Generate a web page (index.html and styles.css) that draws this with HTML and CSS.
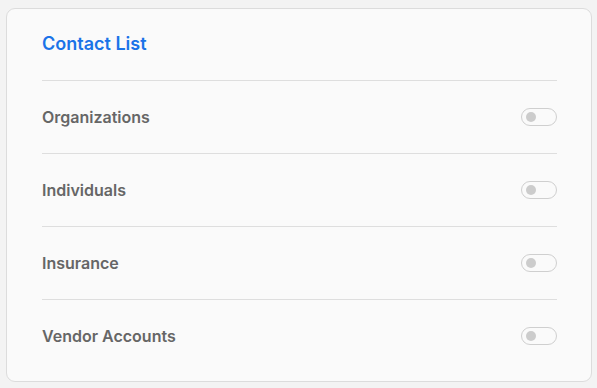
FILE: index.html
```html
<!DOCTYPE html>
<html>
<head>
<meta charset="utf-8">
<link rel="stylesheet" href="styles.css">
</head>
<body>
<div class="card">
  <div class="header"><h1 class="title">Contact List</h1></div>
  <div class="row"><span class="label">Organizations</span><span class="toggle"><span class="knob"></span></span></div>
  <div class="row"><span class="label">Individuals</span><span class="toggle"><span class="knob"></span></span></div>
  <div class="row"><span class="label">Insurance</span><span class="toggle"><span class="knob"></span></span></div>
  <div class="row last"><span class="label">Vendor Accounts</span><span class="toggle"><span class="knob"></span></span></div>
</div>
</body>
</html>
```
FILE: styles.css
```css
html, body { margin: 0; padding: 0; }
body {
  background: #f3f3f3;
  font-family: Inter, "Noto Sans", sans-serif;
  padding: 8px 5px 0 6px;
}
.card {
  background: #fafafa;
  border: 1px solid #dcdcdc;
  border-radius: 9px;
  padding: 0 34px 8px 35px;
  height: 364px;
  box-sizing: content-box;
}
.header {
  padding: 24px 0 25px;
  border-bottom: 1px solid #dedede;
}
.title {
  margin: 0;
  font-size: 18px;
  line-height: 22px;
  font-weight: 600;
  color: #1a73e8;
}
.row {
  height: 72px;
  display: flex;
  align-items: center;
  justify-content: space-between;
  border-bottom: 1px solid #dedede;
}
.row.last { border-bottom: none; }
.label {
  font-size: 16px;
  font-weight: 600;
  color: #666;
}
.toggle {
  width: 30px;
  height: 16px;
  border: 1px solid #cfcfcf;
  border-radius: 999px;
  background: #fafafa;
  display: flex;
  align-items: center;
  padding-left: 4px;
  box-sizing: content-box;
}
.knob {
  width: 10px;
  height: 10px;
  border-radius: 50%;
  background: #cccccc;
}
```
